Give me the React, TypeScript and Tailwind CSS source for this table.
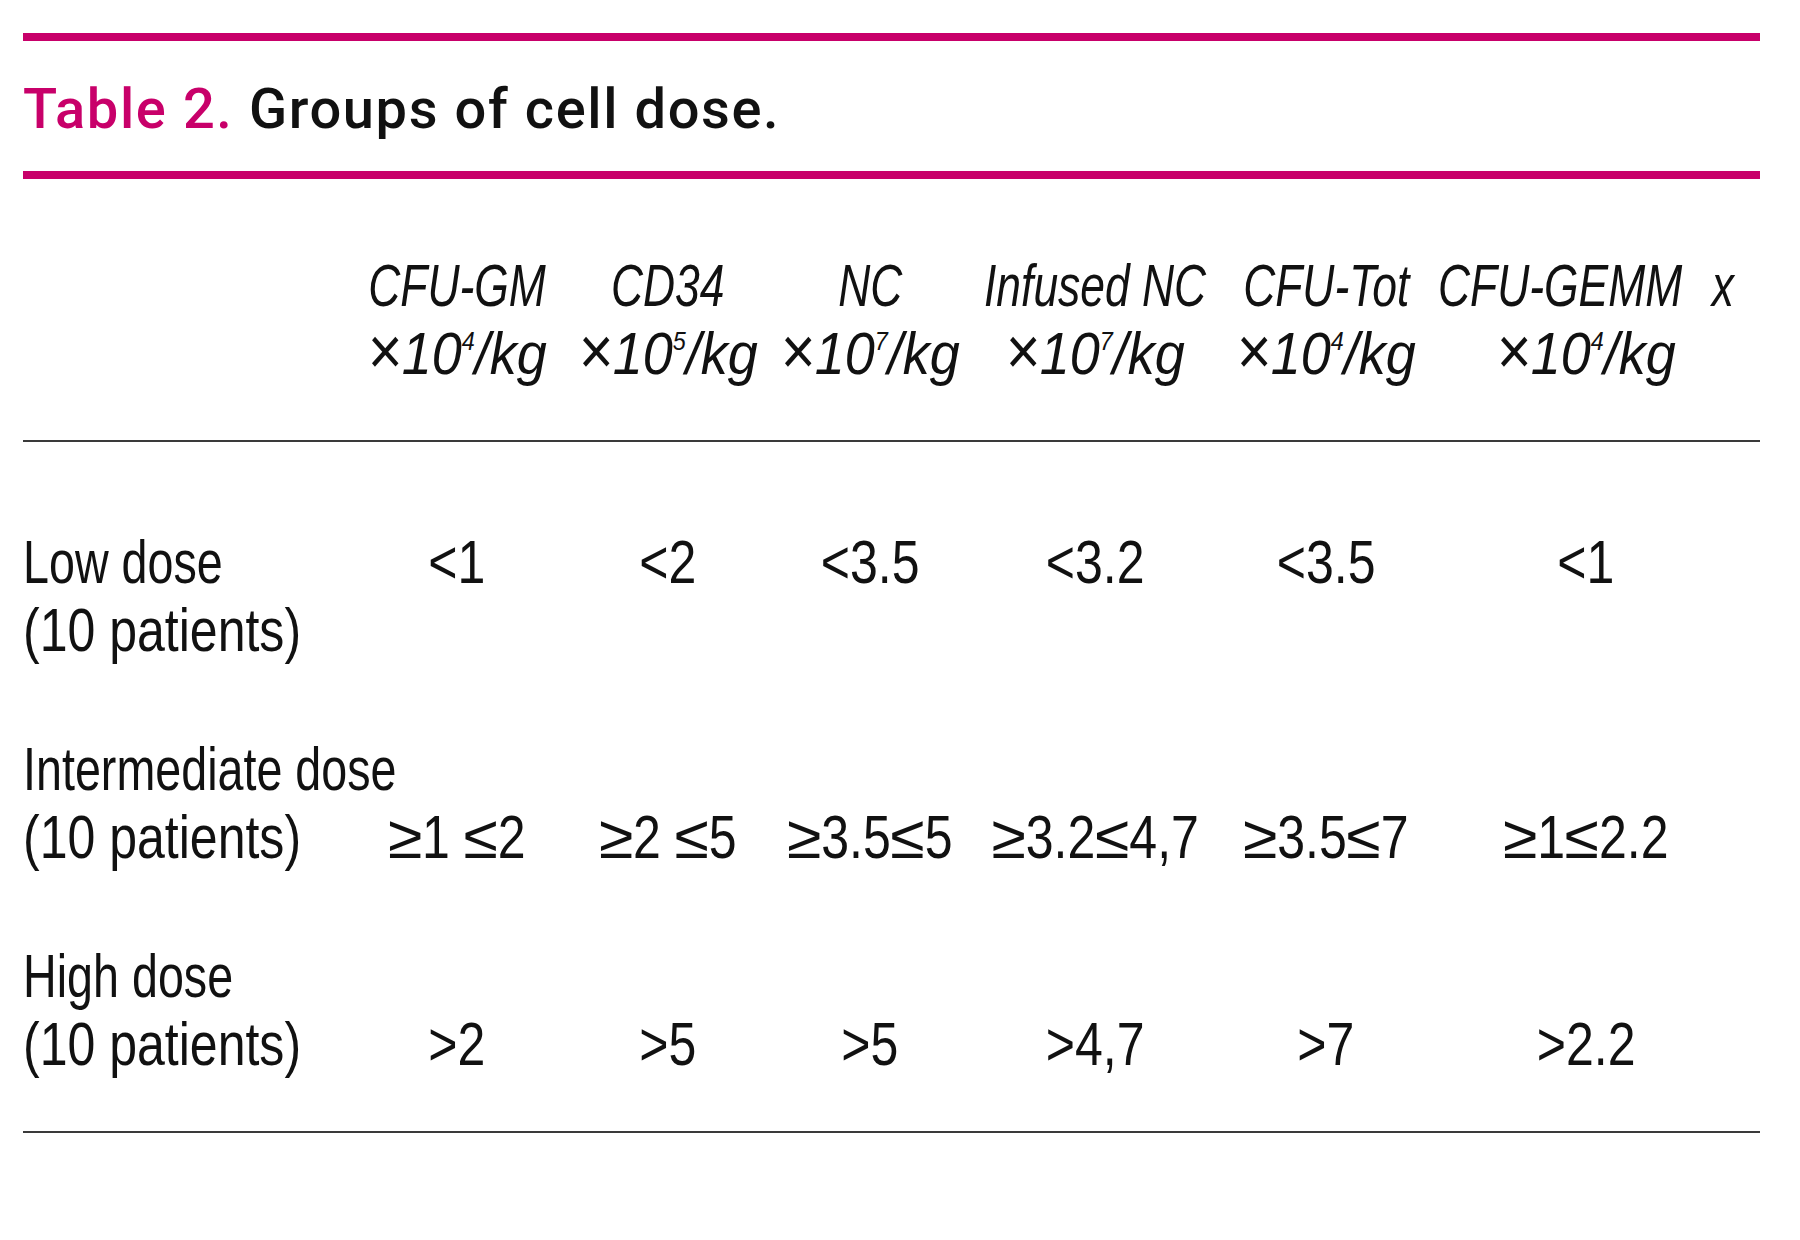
const MAGENTA = "bg-[#c8006a]";

const columns = [
  { name: "CFU-GM", exp: "4" },
  { name: "CD34", exp: "5" },
  { name: "NC", exp: "7" },
  { name: "Infused NC", exp: "7" },
  { name: "CFU-Tot", exp: "4" },
  { name: "CFU-GEMM", exp: "4", extra: "x" },
];

const rows = [
  {
    label: "Low dose",
    values: ["<1", "<2", "<3.5", "<3.2", "<3.5", "<1"],
    onFirstLine: true,
  },
  {
    label: "Intermediate dose",
    values: ["≥1 ≤2", "≥2 ≤5", "≥3.5≤5", "≥3.2≤4,7", "≥3.5≤7", "≥1≤2.2"],
    onFirstLine: false,
  },
  {
    label: "High dose",
    values: [">2", ">5", ">5", ">4,7", ">7", ">2.2"],
    onFirstLine: false,
  },
];

const grid =
  "grid grid-cols-[332px_204px_218px_186px_264px_198px_322px]";

// no narrow face is installed, so the condensed type is squeezed with scale-x
function HeaderCell({ name, exp, extra }: { name: string; exp: string; extra?: string }) {
  return (
    <div className="flex flex-col items-center whitespace-nowrap">
      <span className="inline-block scale-x-[0.74]">
        {name}
        {extra ? <span className="ml-[40px]">{extra}</span> : null}
      </span>
      <span className="inline-block scale-x-[0.9]">
        <span className="text-[66px] leading-[0px]">×</span>
        10
        <span className="align-[24px] text-[26px] leading-none">{exp}</span>
        /kg
      </span>
    </div>
  );
}

// the ≥ and ≤ signs are drawn wider than the digits in the print
function Value({ text }: { text: string }) {
  const parts = text.split(/([≥≤])/);
  return (
    <span className="inline-block scale-x-[0.82]">
      {parts.map((p, i) =>
        p === "≥" || p === "≤" ? (
          <span key={i} className="inline-block scale-x-[1.25] px-[4px]">
            {p}
          </span>
        ) : (
          p
        ),
      )}
    </span>
  );
}

export default function App() {
  return (
    <div className="min-h-[1240px] bg-white pt-[33px] pr-[40px] pl-[23px] text-[#111]">
      <div className={`h-[8px] ${MAGENTA}`} />
      <h1 className="mt-[40px] font-['Roboto','Liberation_Sans',sans-serif] text-[56px] leading-[56px] font-medium tracking-[1.6px]">
        <span className="text-[#c8006a]">Table 2.</span> Groups of cell dose.
      </h1>
      <div className={`mt-[34px] h-[8px] ${MAGENTA}`} />

      <div className="font-['Liberation_Sans',Arial,sans-serif]">
        <div className={`${grid} mt-[73px] text-[60px] leading-[68px] italic`}>
          <div />
          {columns.map((c) => (
            <HeaderCell key={c.name} {...c} />
          ))}
        </div>

        <div className="mt-[52px] h-[2px] bg-[#3a3a3a]" />

        <div className="mt-[86px] flex flex-col gap-[71px] text-[61px] leading-[68px]">
          {rows.map((r) => (
            <div key={r.label} className={grid}>
              <div className="flex flex-col whitespace-nowrap">
                <span className="inline-block origin-left scale-x-[0.765]">{r.label}</span>
                <span className="inline-block origin-left scale-x-[0.82]">(10 patients)</span>
              </div>
              {r.values.map((v, i) => (
                <div
                  key={i}
                  className={`flex justify-center whitespace-nowrap ${
                    r.onFirstLine ? "self-start" : "self-end"
                  }`}
                >
                  <Value text={v} />
                </div>
              ))}
            </div>
          ))}
        </div>

        <div className="mt-[53px] h-[2px] bg-[#3a3a3a]" />
      </div>
    </div>
  );
}
